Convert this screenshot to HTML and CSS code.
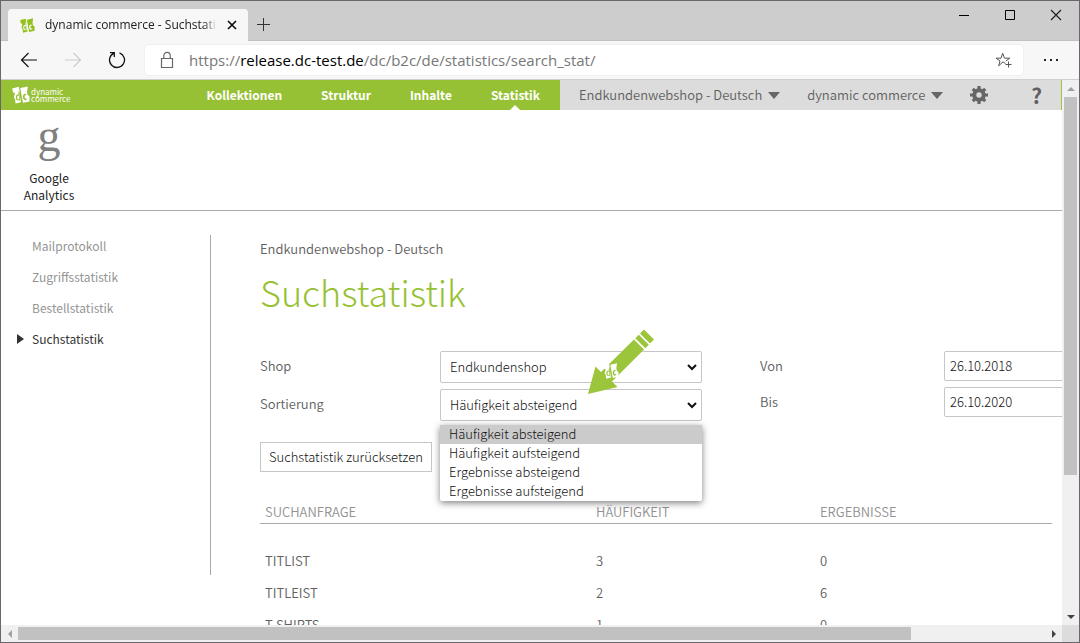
FILE: index.html
```html
<!DOCTYPE html>
<html lang="de">
<head>
<meta charset="utf-8">
<title>dynamic commerce - Suchstatistik</title>
<link rel="stylesheet" href="styles.css">
</head>
<body>
<svg class="defs" aria-hidden="true">
  <symbol id="logo" viewBox="0 0 18 18">
    <g fill="currentColor" fill-rule="evenodd">
      <path d="M.2 2.400 6.800.8 7.600 5 7.900 9.500 9 16.300 3.600 17.600 3 12.800 1.800 11.800 3 7 1 6.600ZM6.600 5.400v3c-3.600-.6-3.600 6.200-.6 6.200l1-.8.200 1h.7L7.400 5.200ZM6.100 9.600c1.300-.2 1.400 3.900.1 4-1.400 0-1.300-3.800-.1-4Z"/>
      <path d="M8.300 2 15.800.4 15 5.600 15.600 9 17.400 10 17.600 15.400 11 16.800 9.400 8.400ZM14.100 8c-4.100-1.200-4.300 6.600-.4 6.200l1.200-.6-.2-1.100c-2.700 1.200-2.600-4.200-.5-3.400Z"/>
    </g>
  </symbol>
</svg>
<div class="window">
  <header class="titlebar">
    <div class="tab">
      <svg class="favicon" aria-hidden="true"><use href="#logo"/></svg>
      <span class="tab-title">dynamic commerce - Suchstatistik</span>
      <button class="tab-close" aria-label="Tab schließen"><svg width="10" height="10" viewBox="0 0 10 10"><path d="M1 1l8 8M9 1L1 9" stroke="#111" stroke-width="1.700"/></svg></button>
    </div>
    <button class="tab-new" aria-label="Neuer Tab"><svg width="14" height="14" viewBox="0 0 14 14"><path d="M7.500 1v13M1 7.500h13" stroke="#333"/></svg></button>
    <div class="window-buttons">
      <button aria-label="Minimieren"><svg width="12" height="12" viewBox="0 0 12 12"><path d="M1 6.500h10" stroke="#000"/></svg></button>
      <button aria-label="Maximieren"><svg width="12" height="12" viewBox="0 0 12 12"><path d="M1.500 1.500h9v9h-9z" fill="none" stroke="#000"/></svg></button>
      <button aria-label="Schließen"><svg width="12" height="12" viewBox="0 0 12 12"><path d="M1 1l10 10M11 1L1 11" stroke="#222" stroke-width="1.200"/></svg></button>
    </div>
  </header>

  <div class="toolbar">
    <button class="tool" aria-label="Zurück"><svg width="18" height="16" viewBox="0 0 18 16" fill="none" stroke="#111" stroke-width="1.200"><path d="M17 8H1.500M8.500 1l-7 7 7 7"/></svg></button>
    <button class="tool" aria-label="Vorwärts"><svg width="18" height="16" viewBox="0 0 18 16" fill="none" stroke="#ccc" stroke-width="1.200"><path d="M1 8h15.500M9.500 1l7 7-7 7"/></svg></button>
    <button class="tool" aria-label="Aktualisieren"><svg width="18" height="18" viewBox="0 0 18 18" fill="none" stroke="#111" stroke-width="1.300"><path d="M11.500 1.900A7.500 7.500 0 1 1 5.600 2.300M2 1.700h4.300V6"/></svg></button>
    <div class="address">
      <svg width="14" height="18" viewBox="0 0 14 18" fill="none" stroke="#666" stroke-width="1.200"><path d="M1.500 7.500h11v9h-11zM3.800 7.500V4.600a3.200 3.200 0 0 1 6.400 0v2.900"/></svg>
      <span class="url">https://<b>release.dc-test.de</b>/dc/b2c/de/statistics/search_stat/</span>
      <button class="fav" aria-label="Favorit hinzufügen"><svg width="18" height="17" viewBox="0 0 18 17" fill="none" stroke="#555"><path d="M10.500 11.500 8 9.900 3.700 13.800 5 9 1 6.200h5L7.700 1.300 9.500 6.200h5.300l-4 2.800M13.500 9.500v6M10.500 12.500h6"/></svg></button>
    </div>
    <button class="more" aria-label="Einstellungen und mehr"><i></i><i></i><i></i></button>
  </div>

  <div class="viewport">
    <div class="page">
      <nav class="topnav">
        <div class="brandbar">
          <a class="brand" href="#"><svg aria-hidden="true"><use href="#logo"/></svg><span>dynamic<br>commerce</span></a>
          <div class="menu">
            <a href="#">Kollektionen</a><a href="#">Struktur</a><a href="#">Inhalte</a><a class="current" href="#">Statistik</a>
          </div>
        </div>
        <div class="userbar">
          <button class="drop">Endkundenwebshop - Deutsch</button>
          <button class="drop">dynamic commerce</button>
          <button class="gear" aria-label="Einstellungen"><svg width="18" height="18" viewBox="-9 -9 18 18"><circle r="4.700" fill="none" stroke="#666" stroke-width="4"/><g stroke="#666" stroke-width="3.200"><path d="M0-9v4M0 9V5M-9 0h4M9 0H5M-6.200-6.200l3 3M6.200 6.200l-3-3M-6.200 6.200l3-3M6.200-6.200l-3 3"/></g></svg></button>
          <button class="help">?</button>
        </div>
      </nav>

      <div class="apps">
        <a class="app" href="#"><span class="app-icon">g</span>Google<br>Analytics</a>
      </div>

      <div class="columns">
        <aside class="sidebar">
          <a href="#">Mailprotokoll</a>
          <a href="#">Zugriffsstatistik</a>
          <a href="#">Bestellstatistik</a>
          <a class="current" href="#">Suchstatistik</a>
        </aside>
        <main class="main">
          <p class="context">Endkundenwebshop - Deutsch</p>
          <h1>Suchstatistik</h1>
          <form class="filters">
            <div class="fields">
              <label for="shop">Shop</label>
              <select id="shop"><option>Endkundenshop</option></select>
              <label for="sort">Sortierung</label>
              <div class="combo">
                <select id="sort"><option>Häufigkeit absteigend</option><option>Häufigkeit aufsteigend</option><option>Ergebnisse absteigend</option><option>Ergebnisse aufsteigend</option></select>
                <ul class="options" role="listbox" aria-label="Sortierung">
                  <li role="option" aria-selected="true">Häufigkeit absteigend</li>
                  <li role="option">Häufigkeit aufsteigend</li>
                  <li role="option">Ergebnisse absteigend</li>
                  <li role="option">Ergebnisse aufsteigend</li>
                </ul>
                <svg class="pointer" viewBox="0 0 70 68" aria-hidden="true">
                  <g fill="#9bc53a"><path d="M2 67 9.500 39.500 15 45 48 12.500 58 22.500 26 54.500 31.500 60Z"/><path d="M49.300 11.200 52.800 7.700 62.800 17.700 59.300 21.200ZM54 6.500 58 2.500 68 12.500 64 16.500Z"/></g>
                  <svg x="17" y="36" width="16" height="16" color="#fff"><use href="#logo"/></svg>
                </svg>
              </div>
            </div>
            <div class="fields dates">
              <label for="from">Von</label>
              <input id="from" type="text" value="26.10.2018">
              <label for="to">Bis</label>
              <input id="to" type="text" value="26.10.2020">
            </div>
          </form>
          <button class="reset">Suchstatistik zurücksetzen</button>
          <table>
            <thead><tr><th>SUCHANFRAGE</th><th>HÄUFIGKEIT</th><th>ERGEBNISSE</th></tr></thead>
            <tbody>
              <tr><td>TITLIST</td><td>3</td><td>0</td></tr>
              <tr><td>TITLEIST</td><td>2</td><td>6</td></tr>
              <tr><td>T-SHIRTS</td><td>1</td><td>0</td></tr>
            </tbody>
          </table>
        </main>
      </div>
    </div>
    <div class="vbar"><span class="arrow up"></span><div class="track"><div class="thumb"></div></div><span class="arrow down"></span></div>
    <div class="hbar"><span class="arrow left"></span><div class="track"><div class="thumb"></div></div><span class="arrow right"></span></div>
    <div class="corner"></div>
  </div>
</div>
</body>
</html>
```
FILE: styles.css
```css
* { box-sizing: border-box; }
body {
  margin: 0;
  font: 350 13px/17px "Noto Sans CJK SC", "Noto Sans", sans-serif;
  color: #606060;
}
button { border: 0; padding: 0; background: none; font: inherit; color: inherit; }
a { color: inherit; text-decoration: none; }
svg { display: block; }
.defs { position: absolute; width: 0; height: 0; }

.window {
  height: 100vh;
  display: flex;
  flex-direction: column;
  border: 1px solid #696769;
  background: #fff;
  overflow: hidden;
}

/* browser chrome */
.titlebar {
  height: 40px;
  flex: none;
  display: flex;
  align-items: flex-end;
  background: #cdcdcd;
  border-bottom: 1px solid #c0c0c0;
  padding-left: 7px;
}
.tab {
  width: 240px;
  height: 32px;
  margin-bottom: -1px;
  padding: 0 11px 0 12px;
  display: flex;
  align-items: center;
  gap: 10px;
  background: #f7f7f7;
  border-radius: 4px 4px 0 0;
  color: #222;
  font: 12px/16px "Open Sans", sans-serif;
}
.favicon { width: 15px; height: 15px; color: #95c11f; flex: none; }
.tab-title {
  flex: 1;
  white-space: nowrap;
  overflow: hidden;
  mask-image: linear-gradient(90deg, #000 92%, transparent);
}
.tab-new { margin: 0 0 9px 8px; }
.window-buttons { margin-left: auto; display: flex; align-self: flex-start; }
.window-buttons button { width: 46px; height: 28px; display: grid; place-items: center; }

.toolbar {
  height: 39px;
  flex: none;
  display: flex;
  align-items: center;
  background: #f7f7f7;
  border-bottom: 1px solid #cfcfcf;
  padding: 0 11px 0 6px;
}
.tool { width: 44px; height: 30px; display: grid; place-items: center; }
.address {
  flex: 1;
  height: 32px;
  margin-left: 5px;
  padding: 0 10px 0 15px;
  display: flex;
  align-items: center;
  gap: 15px;
  background: #fff;
  border: 1px solid #f0f0f0;
  border-radius: 4px;
}
.url { flex: 1; font: 15px/20px "Open Sans", sans-serif; color: #777; }
.url b { font-weight: 400; color: #000; }
.more { width: 34px; margin-left: 10px; display: flex; justify-content: center; gap: 4px; }
.more i { width: 2px; height: 2px; background: #222; }

.viewport {
  flex: 1;
  min-height: 0;
  display: grid;
  grid-template: minmax(0, 1fr) 17px / minmax(0, 1fr) 17px;
}
.page { overflow: hidden; }

/* shop navigation */
.topnav { display: flex; height: 30px; border-right: 1px solid #9bc53a; }
.brandbar {
  width: 559px;
  flex: none;
  display: flex;
  justify-content: space-between;
  background: #97c135;
  color: #fff;
}
.brand { display: flex; align-items: center; gap: 1px; padding-left: 11px; font: 8px/7px "Noto Sans CJK SC", sans-serif; }
.brand svg { width: 18px; height: 18px; }
.menu { display: flex; gap: 39px; padding-right: 20px; font-size: 12px; font-weight: 700; line-height: 30px; }
.menu a { position: relative; }
.menu .current::after {
  content: "";
  position: absolute;
  bottom: 0;
  left: 50%;
  margin-left: -5px;
  border: 5px solid transparent;
  border-top: 0;
  border-bottom-color: #fff;
}
.userbar { flex: 1; display: flex; align-items: center; background: #dcdcdc; padding: 0 19px; }
.drop { display: flex; align-items: center; gap: 6px; margin-right: 27px; line-height: 30px; }
.drop::after { content: ""; border: 6px solid transparent; border-top: 7px solid #666; border-bottom: 0; }
.help { margin-left: auto; font: 700 21px/28px "Noto Sans CJK SC", sans-serif; }

.apps { height: 101px; border-bottom: 1px solid #aaa; padding-left: 8px; }
.app { display: block; width: 80px; text-align: center; color: #222; font-size: 12px; font-weight: 400; }
.app-icon { display: block; padding-bottom: 8px; font: 46px/51px "Liberation Serif", serif; color: #808080; }

.columns { display: flex; align-items: flex-start; padding-top: 24px; }
.sidebar { width: 210px; min-height: 340px; flex: none; border-right: 1px solid #aaa; font-size: 12px; }
.sidebar a { display: block; height: 31px; padding-left: 31px; line-height: 22px; color: #959595; font-weight: 400; }
.sidebar .current { display: flex; align-items: flex-start; padding-left: 16px; color: #333; }
.sidebar .current::before {
  content: "";
  margin: 6px 8px 0 0;
  border: 5px solid transparent;
  border-left: 7px solid #333;
  border-right: 0;
}

.main { flex: 1; min-width: 0; padding: 4px 10px 0 49px; }
.context { margin: 0; line-height: 19px; }
h1 { margin: 9px 0 35px; font-size: 36px; line-height: 49px; font-weight: 300; color: #97c135; }
.filters { display: flex; gap: 58px; }
.fields { display: grid; grid-template-columns: 180px 262px; gap: 6px 0; flex: none; }
.fields label { line-height: 30px; }
.dates { grid-template-columns: 184px 262px; align-content: start; }
select, .dates input {
  width: 100%;
  height: 32px;
  padding: 0 9px 1px;
  border: 1px solid #c6c6c6;
  border-radius: 2px;
  background: #fff;
  color: #111;
  font: 300 13px/17px "Noto Sans CJK SC", sans-serif;
}
select {
  appearance: none;
  background: #fff url("data:image/svg+xml,%3Csvg xmlns='http://www.w3.org/2000/svg' width='10' height='7'%3E%3Cpath d='M1 1l4 4 4-4' fill='none' stroke='%23111' stroke-width='2'/%3E%3C/svg%3E") no-repeat right 4px center;
}
.dates input { height: 30px; padding: 0 5px 1px; }
.combo { position: relative; }
.options {
  position: absolute;
  z-index: 1;
  top: 36px;
  left: 0;
  right: 0;
  margin: 0;
  padding: 0;
  list-style: none;
  background: #fff;
  color: #111;
  font-weight: 300;
  border-radius: 0 0 2px 2px;
  box-shadow: 0 2px 7px rgba(0, 0, 0, 0.5);
}
.options li { height: 19px; line-height: 17px; padding-left: 9px; }
.options [aria-selected] { background: #cbcbcb; }
.pointer { position: absolute; z-index: 2; width: 70px; height: 68px; left: 146px; top: -62px; }

.reset {
  margin-top: 21px;
  height: 30px;
  padding: 0 8px 2px;
  border: 1px solid #c6c6c6;
  color: #111;
  font-weight: 300;
}
table { width: 100%; margin-top: 28px; border-collapse: collapse; table-layout: fixed; }
th, td { padding: 0 5px; text-align: left; font-weight: 350; }
th { height: 23px; border-bottom: 1px solid #aaa; color: #929292; }
th:first-child { width: 331px; }
th:nth-child(2) { width: 224px; }
td { height: 32px; }
tbody::before { content: ""; display: block; height: 21px; }

/* scrollbars */
.vbar, .hbar { display: flex; background: #f0f0f0; }
.vbar { flex-direction: column; }
.track { flex: 1; min-width: 0; min-height: 0; }
.thumb { background: #c1c1c1; }
.vbar .thumb { height: 74%; margin: 0 2px; }
.hbar { padding: 2px 0; }
.hbar .thumb { width: 87%; height: 13px; }
.arrow { width: 17px; height: 17px; display: grid; place-items: center; }
.hbar .arrow { height: 13px; }
.arrow::before { content: ""; border: 4px solid transparent; }
.up::before { border-top: 0; border-bottom-color: #a0a0a0; }
.down::before { border-bottom: 0; border-top-color: #444; }
.left::before { border-left: 0; border-right-color: #a0a0a0; }
.right::before { border-right: 0; border-left-color: #444; }
.corner { background: #dcdcdc; }
```
